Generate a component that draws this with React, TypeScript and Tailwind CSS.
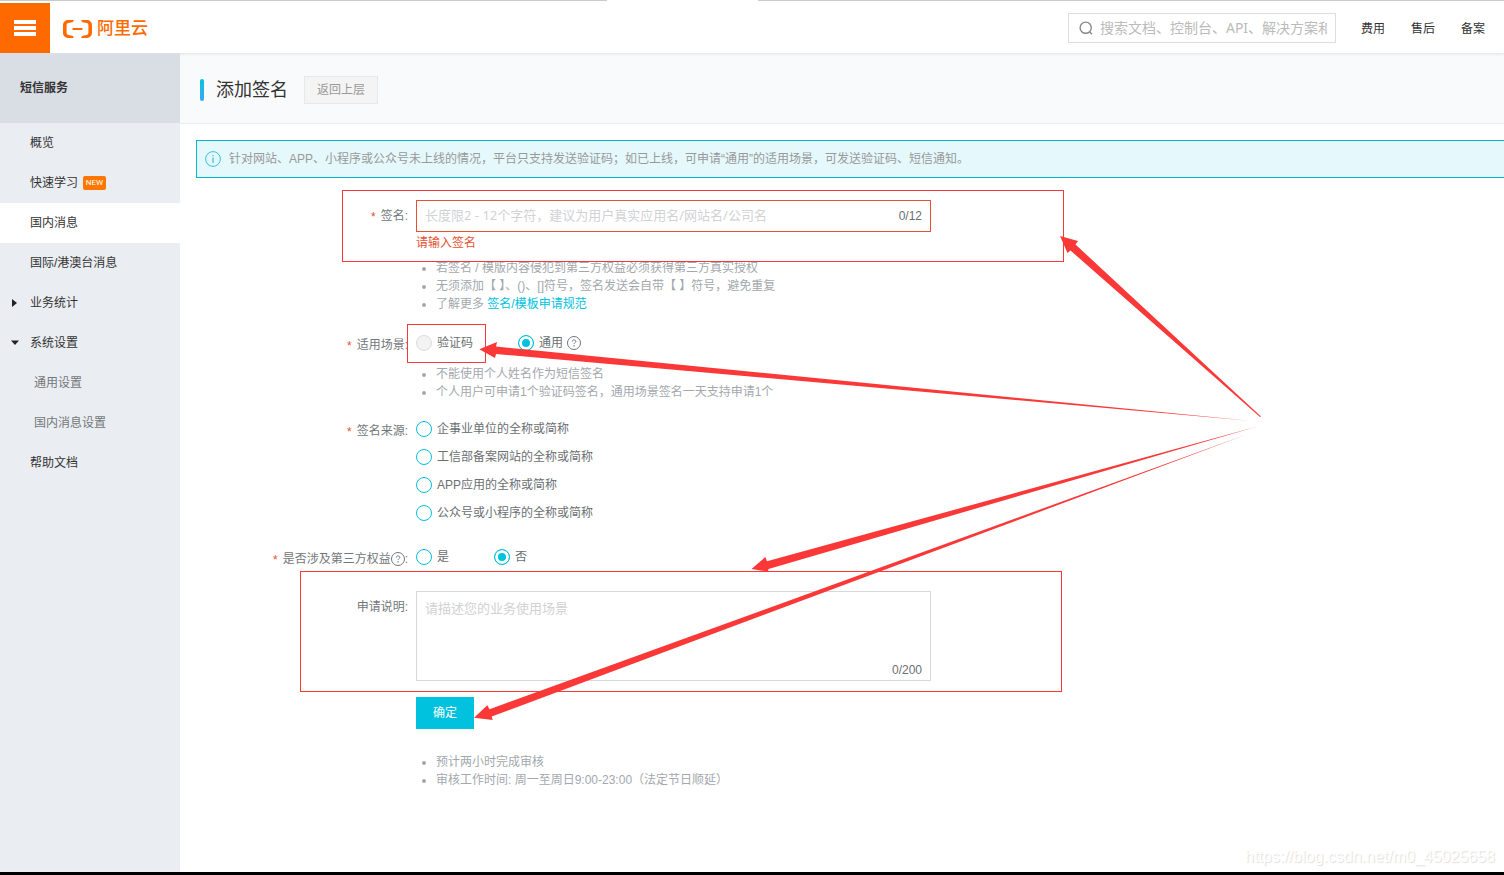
import React, { useState } from "react";

interface RowProps {
  label: React.ReactNode;
  htmlFor?: string;
  required?: boolean;
  className?: string;
  children: React.ReactNode;
}

const sources = [
  "企事业单位的全称或简称",
  "工信部备案网站的全称或简称",
  "APP应用的全称或简称",
  "公众号或小程序的全称或简称",
];

const HelpIcon = () => (
  <svg className="size-[14px] shrink-0" viewBox="0 0 14 14" fill="none" stroke="#73777a">
    <circle cx="7" cy="7" r="6.5" />
    <path d="M5.2 5.6c0-1.1.8-1.8 1.8-1.8s1.8.7 1.8 1.6c0 1.2-1.7 1.3-1.7 2.7" />
    <path d="M7.1 9.2v1.2" strokeWidth="1.2" />
  </svg>
);

const Row = ({ label, htmlFor, required, className, children }: RowProps) => (
  <div className={`flex gap-2 ${className ?? ""}`}>
    <label
      htmlFor={htmlFor}
      className="flex h-8 w-[212px] shrink-0 items-center justify-end text-[#73777a]"
    >
      {required && <span className="mr-[5px] pt-[2px] text-[#e8502f]">*</span>}
      {label}:
    </label>
    <div className="min-w-0 flex-1">{children}</div>
  </div>
);

interface RadioProps {
  name: string;
  label: string;
  checked: boolean;
  disabled?: boolean;
  onChange?: () => void;
}

const Radio = ({ name, label, checked, disabled, onChange }: RadioProps) => (
  <label className="flex h-7 items-center gap-[5px] text-[#6b6f73]">
    <input
      type="radio"
      name={name}
      checked={checked}
      disabled={disabled}
      onChange={() => onChange?.()}
      className="size-4 shrink-0 appearance-none rounded-full border border-[#00c1de] bg-white checked:bg-[#00c1de] checked:shadow-[inset_0_0_0_3px_#fff] disabled:border-[#dddddd] disabled:bg-[#f3f3f3]"
    />
    {label}
  </label>
);

const Tips = ({ className, children }: { className?: string; children: React.ReactNode }) => (
  <ul className={`list-disc pl-5 leading-[18px] text-[#a3a8ad] ${className ?? ""}`}>{children}</ul>
);

const Header = () => (
  <header className="relative z-10 bg-white shadow-[0_1px_3px_#dfe1e4]">
    <div className="flex h-px justify-between">
      <div className="w-[607px] bg-[#cbcbcb]" />
      <div className="w-[746px] bg-[#cbcbcb]" />
    </div>
    <div className="mt-[2px] flex h-[50px] items-center">
      <button aria-label="菜单" className="flex size-[50px] items-center justify-center bg-[#ff6a00]">
        <svg className="h-4 w-[22px]" viewBox="0 0 22 16" fill="#fff">
          <path d="M0 0h22v4H0zM0 6h22v4H0zM0 12h22v4H0z" />
        </svg>
      </button>
      <a href="#" className="ml-[13px] flex items-end gap-[5px] pt-[2px] text-[17px] leading-[18px] font-medium text-[#ff6a00]">
        <svg className="h-[18px] w-[29px]" viewBox="0 0 29 18" fill="#ff6a00">
          <path d="M11 0H5a5 5 0 0 0-5 5v8a5 5 0 0 0 5 5h6l-1.4-2.3-4.3-.8A2 2 0 0 1 3.6 13V5a2 2 0 0 1 1.7-1.9l4.3-.8z" />
          <path d="M18 0h6a5 5 0 0 1 5 5v8a5 5 0 0 1-5 5h-6l1.4-2.3 4.3-.8a2 2 0 0 0 1.7-1.9V5a2 2 0 0 0-1.7-1.9l-4.3-.8z" />
          <path d="M9.6 8h9.800v2H9.600z" />
        </svg>
        阿里云
      </a>
      <div className="ml-auto flex h-[30px] w-[268px] items-center border border-[#dddddd] pr-2 pl-[10px]">
        <svg className="size-[14px] shrink-0" viewBox="0 0 14 14" fill="none" stroke="#85888b" strokeWidth="1.4">
          <circle cx="6.7" cy="6.7" r="5.6" />
          <path d="M10.6 10.8l2.4 2.4" />
        </svg>
        <input
          aria-label="搜索"
          placeholder="搜索文档、控制台、API、解决方案和产品"
          className="ml-[7px] min-w-0 flex-1 font-['Noto_Sans','Noto_Sans_CJK_SC',sans-serif] text-sm outline-none placeholder:text-[#bbbbbb]"
        />
      </div>
      <nav className="mr-[19px] ml-[25px] flex gap-[26px] pt-[2px] text-[#333333]">
        <a href="#">费用</a>
        <a href="#">售后</a>
        <a href="#">备案</a>
      </nav>
    </div>
  </header>
);

const Sidebar = () => {
  const item = "relative flex h-10 items-center pl-[30px]";
  const sub = "flex h-10 items-center pl-[34px] text-[#73777a]";

  return (
    <aside className="w-[180px] shrink-0 bg-[#eaedf1] text-[#333333]">
      <h2 className="flex h-[70px] items-center bg-[#d9dde4] pl-5 font-bold">短信服务</h2>
      <nav>
        <a href="#" className={item}>概览</a>
        <a href="#" className={item}>
          快速学习
          <span className="ml-[5px] flex h-[14px] w-[23px] items-center justify-center rounded-xs bg-[#ff7700] font-['Roboto',sans-serif] text-[8px] text-white">
            NEW
          </span>
        </a>
        <a href="#" className={`${item} bg-white`}>国内消息</a>
        <a href="#" className={item}>国际/港澳台消息</a>
        <a href="#" className={item}>
          <svg className="absolute left-3 size-2" viewBox="0 0 8 8" fill="#222">
            <path d="M0 0l5 4-5 4z" />
          </svg>
          业务统计
        </a>
        <a href="#" className={item}>
          <svg className="absolute left-[11px] size-2" viewBox="0 0 8 8" fill="#222">
            <path d="M0 1.500h8L4 6z" />
          </svg>
          系统设置
        </a>
        <a href="#" className={sub}>通用设置</a>
        <a href="#" className={sub}>国内消息设置</a>
        <a href="#" className={item}>帮助文档</a>
      </nav>
    </aside>
  );
};

// red boxes and arrows drawn over the form
const Marks = () => (
  <svg className="pointer-events-none absolute inset-0 z-20 size-full" fill="none">
    <g stroke="#fb3838">
      <rect x="342.5" y="190.5" width="721" height="71" />
      <rect x="407.5" y="324.5" width="78" height="38" />
      <rect x="300.5" y="571.5" width="761" height="120" />
    </g>
    <g fill="#fb3838">
      <path d="M1060 236L1078 241L1075.500 244.500L1261 416.500L1260 417L1070.500 250.500L1067.500 253Z" />
      <path d="M479.300 349.300L497 342L496 346.500L1252 421L496 354L495 358Z" />
      <path d="M751.500 569L765.300 557L767 561.300L1259 426L768.500 569L768 571.500Z" />
      <path d="M474 717.700L487.300 705.300L489.500 709.300L1248 434L491.700 716.500L492.700 720Z" />
    </g>
  </svg>
);

const App = () => {
  const [sign, setSign] = useState("");
  const [scene, setScene] = useState("通用");
  const [source, setSource] = useState("");
  const [third, setThird] = useState("否");
  const [remark, setRemark] = useState("");

  return (
    <div className="relative flex min-h-screen flex-col overflow-hidden bg-white font-['Liberation_Sans','Noto_Sans_CJK_SC',sans-serif] text-xs">
      <Header />
      <div className="flex flex-1">
        <Sidebar />
        <main className="min-w-0 flex-1">
          <div className="flex h-[71px] items-center border-b border-[#ebecec] bg-[#f9fafc] pt-1 pl-5">
            <div className="h-[22px] w-1 rounded-xs bg-linear-to-b from-[#00c1de] to-[#35a8f5]" />
            <h1 className="ml-3 text-lg text-[#333333]">添加签名</h1>
            <button className="ml-4 h-7 w-[74px] border border-[#e8e8e8] bg-[#f4f4f4] text-[#999999]">
              返回上层
            </button>
          </div>

          <div className="pl-4">
            <div className="mt-4 flex h-[38px] items-center border-y border-l border-[#00b7d8] bg-[#e5f8fc] pl-2 text-[#999999]">
              <svg className="mr-2 size-4 shrink-0" viewBox="0 0 16 16" fill="none" stroke="#35c4de">
                <circle cx="8" cy="8" r="7.400" />
                <path d="M8 4v1.300M8 6.500v5.500" strokeWidth="1.200" />
              </svg>
              针对网站、APP、小程序或公众号未上线的情况，平台只支持发送验证码；如已上线，可申请“通用”的适用场景，可发送验证码、短信通知。
            </div>

            <form onSubmit={(e) => e.preventDefault()}>
              <Row label="签名" htmlFor="sign" required className="mt-[22px]">
                <div className="flex h-8 w-full max-w-[515px] items-center border border-[#e8502f] px-2">
                  <input
                    id="sign"
                    maxLength={12}
                    value={sign}
                    onChange={(e) => setSign(e.target.value)}
                    placeholder="长度限2 - 12个字符，建议为用户真实应用名/网站名/公司名"
                    className="min-w-0 flex-1 font-['Noto_Sans','Noto_Sans_CJK_SC',sans-serif] text-[13px] outline-none placeholder:text-[#d0d2d4]"
                  />
                  <span className="text-[#6b6f73]">{sign.length}/12</span>
                </div>
                <p className="mt-[2px] leading-[18px] text-[#e8502f]">请输入签名</p>
                <Tips className="mt-[7px]">
                  <li>若签名 / 模版内容侵犯到第三方权益必须获得第三方真实授权</li>
                  <li>无须添加【 】、()、[]符号，签名发送会自带【 】符号，避免重复</li>
                  <li>
                    了解更多 <a href="#" className="text-[#00c1de]">签名/模板申请规范</a>
                  </li>
                </Tips>
              </Row>

              <Row label="适用场景" required className="mt-4">
                <div className="flex items-center">
                  <Radio name="scene" label="验证码" checked={scene === "验证码"} disabled />
                  <div className="ml-[45px] flex items-center gap-1">
                    <Radio
                      name="scene"
                      label="通用"
                      checked={scene === "通用"}
                      onChange={() => setScene("通用")}
                    />
                    <HelpIcon />
                  </div>
                </div>
                <Tips className="mt-2">
                  <li>不能使用个人姓名作为短信签名</li>
                  <li>个人用户可申请1个验证码签名，通用场景签名一天支持申请1个</li>
                </Tips>
              </Row>

              <Row label="签名来源" required className="mt-[14px]">
                {sources.map((s) => (
                  <Radio
                    key={s}
                    name="source"
                    label={s}
                    checked={source === s}
                    onChange={() => setSource(s)}
                  />
                ))}
              </Row>

              <Row
                label={<>是否涉及第三方权益<HelpIcon /></>}
                required
                className="mt-4"
              >
                <div className="flex gap-[45px]">
                  {["是", "否"].map((v) => (
                    <Radio key={v} name="third" label={v} checked={third === v} onChange={() => setThird(v)} />
                  ))}
                </div>
              </Row>

              <Row label="申请说明" htmlFor="remark" className="mt-4">
                <div className="flex h-[90px] w-full max-w-[515px] flex-col border border-[#d7d8d9] px-2 pt-2 pb-[2px]">
                  <textarea
                    id="remark"
                    maxLength={200}
                    value={remark}
                    onChange={(e) => setRemark(e.target.value)}
                    placeholder="请描述您的业务使用场景"
                    className="min-h-0 flex-1 resize-none text-[13px] leading-[18px] outline-none placeholder:text-[#d0d2d4]"
                  />
                  <span className="self-end text-[#6b6f73]">{remark.length}/200</span>
                </div>
                <button type="submit" className="mt-4 h-8 w-[58px] bg-[#00c1de] text-white">
                  确定
                </button>
                <Tips className="mt-6">
                  <li>预计两小时完成审核</li>
                  <li>审核工作时间: 周一至周日9:00-23:00（法定节日顺延）</li>
                </Tips>
              </Row>
            </form>
          </div>
        </main>
      </div>
      <footer className="h-[3px] bg-black" />
      <Marks />
      <p className="absolute right-[9px] bottom-[6px] text-base text-white [text-shadow:1px_1px_1px_#dddddd]">
        https://blog.csdn.net/m0_45025658
      </p>
    </div>
  );
};

export default App;
